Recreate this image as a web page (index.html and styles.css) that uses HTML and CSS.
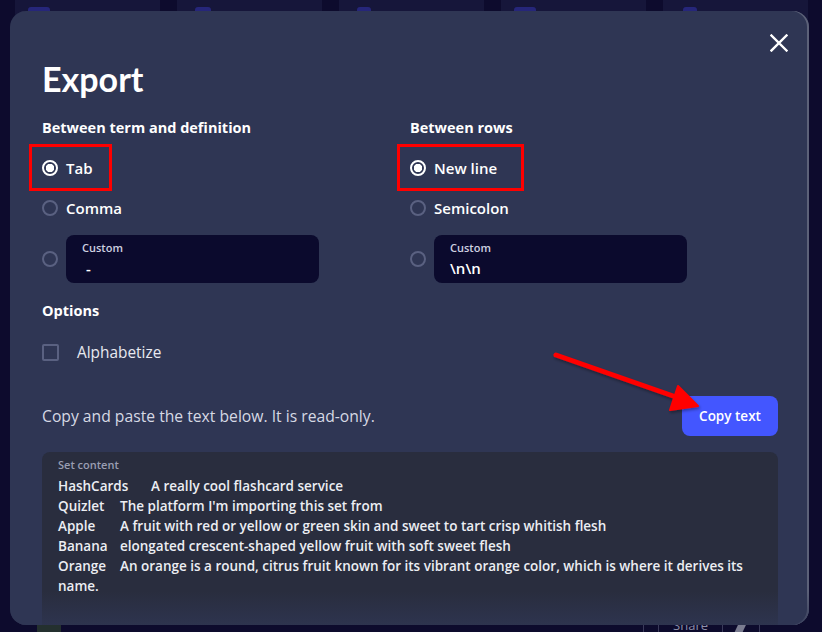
FILE: index.html
```html
<!DOCTYPE html>
<html>
<head>
<meta charset="utf-8">
<title>Export</title>
<link rel="stylesheet" href="styles.css">
</head>
<body>
<div class="page">
  <div class="cards">
    <div class="card"><span class="card-icon"></span></div>
    <div class="card"><span class="card-icon ci2"></span></div>
    <div class="card"><span class="card-icon ci3"></span></div>
    <div class="card"><span class="card-icon"></span></div>
    <div class="card"><span class="card-icon ci5"></span></div>
  </div>
  <div class="bottombar">
    <div class="green"></div>
    <div class="actions">
      <span class="sep"></span><span class="sep"></span>
      <span class="share">Share</span>
      <span class="sep"></span><span class="pen"></span><span class="sep"></span>
    </div>
  </div>
</div>

<div class="modal">
  <button class="close" aria-label="Close">
    <svg width="18" height="18" viewBox="0 0 18 18"><path d="M1.5 1.5 L16.5 16.5 M16.5 1.5 L1.5 16.5" stroke="#fff" stroke-width="2.4" stroke-linecap="square"/></svg>
  </button>
  <h1 class="title">Export</h1>

  <div class="columns">
    <div class="col">
      <h2 class="heading">Between term and definition</h2>
      <label class="radio-row first marked mark-left"><span class="radio checked"></span><span class="rlabel">Tab</span></label>
      <label class="radio-row"><span class="radio"></span><span class="rlabel">Comma</span></label>
      <div class="radio-row custom-row"><span class="radio"></span>
        <div class="custom"><span class="custom-label">Custom</span><span class="custom-value">&nbsp;-</span></div>
      </div>
    </div>
    <div class="col">
      <h2 class="heading">Between rows</h2>
      <label class="radio-row first marked mark-right"><span class="radio checked"></span><span class="rlabel">New line</span></label>
      <label class="radio-row"><span class="radio"></span><span class="rlabel">Semicolon</span></label>
      <div class="radio-row custom-row"><span class="radio"></span>
        <div class="custom"><span class="custom-label">Custom</span><span class="custom-value">\n\n</span></div>
      </div>
    </div>
  </div>

  <h2 class="heading options">Options</h2>
  <label class="check-row"><span class="checkbox"></span><span class="clabel">Alphabetize</span></label>

  <div class="copy-row">
    <p class="hint">Copy and paste the text below. It is read-only.</p>
    <button class="copy-btn">Copy text</button>
  </div>

  <div class="content-box">
    <div class="content-label">Set content</div>
<pre class="content-text">HashCards	A really cool flashcard service
Quizlet	The platform I'm importing this set from
Apple	A fruit with red or yellow or green skin and sweet to tart crisp whitish flesh
Banana	elongated crescent-shaped yellow fruit with soft sweet flesh
Orange	An orange is a round, citrus fruit known for its vibrant orange color, which is where it derives its
name.
</pre>
  </div>
  <div class="fade"></div>
</div>

<svg class="arrow" width="822" height="632" viewBox="0 0 822 632">
  <defs>
    <filter id="sh" x="-10%" y="-10%" width="120%" height="140%">
      <feDropShadow dx="1" dy="2" stdDeviation="1.5" flood-color="#000" flood-opacity="0.35"/>
    </filter>
  </defs>
  <g filter="url(#sh)" fill="#ff0000" stroke="#ff0000">
    <line x1="556" y1="355" x2="676" y2="397" stroke-width="5" stroke-linecap="round"/>
    <polygon points="698,406 670,410 678,386" stroke-width="2" stroke-linejoin="round"/>
  </g>
</svg>
</body>
</html>
```

FILE: styles.css
```css
* { box-sizing: border-box; }
html, body { margin: 0; padding: 0; }
body {
  width: 822px;
  height: 632px;
  overflow: hidden;
  background: #0d0b2d;
  font-family: "Open Sans", Lato, sans-serif;
  position: relative;
}

/* background page */
.page {
  height: 632px;
  display: flex;
  flex-direction: column;
  justify-content: space-between;
}
.cards {
  display: flex;
  gap: 17px;
  padding-left: 15px;
}
.card {
  width: 145px;
  height: 60px;
  background: #16163a;
  position: relative;
}
.card-icon {
  display: block;
  margin: 7px 0 0 13px;
  width: 22px;
  height: 10px;
  background: #26267a;
  border-radius: 3px 3px 0 0;
}
.ci2 { margin-left: 18px; width: 16px; }
.ci3 { margin-left: 18px; width: 14px; }
.ci5 { margin-left: 20px; width: 14px; }

.bottombar {
  height: 40px;
  display: flex;
  justify-content: space-between;
  align-items: flex-end;
  padding: 0 62px 0 37px;
}
.green {
  width: 24px;
  height: 40px;
  background: #24302f;
}
.actions {
  display: flex;
  align-items: flex-end;
  gap: 14px;
  height: 40px;
}
.sep { width: 1px; height: 30px; background: #3a3a5a; }
.share { color: #8d8fa8; font-size: 13px; line-height: 14px; margin-bottom: 0; }
.pen { width: 8px; height: 10px; background: #7a7c90; transform: skewX(-25deg); }

/* modal */
.modal {
  position: absolute;
  left: 10px;
  top: 11px;
  width: 799px;
  height: 614px;
  background: #2f3654;
  border-radius: 16px;
  overflow: hidden;
  padding: 48px 31px 0 32px;
  color: #fff;
  box-shadow: inset -2px 0 0 #5c6178;
}
.close {
  position: absolute;
  top: 23px;
  right: 21px;
  width: 18px;
  height: 18px;
  padding: 0;
  border: 0;
  background: none;
  display: flex;
}
.title {
  margin: 0;
  font-family: Lato, sans-serif;
  font-size: 34px;
  line-height: 40px;
  font-weight: 700;
}
.columns {
  display: grid;
  grid-template-columns: 368px 368px;
  margin-top: 19px;
}
.heading {
  margin: 0;
  font-size: 14.5px;
  line-height: 20px;
  font-weight: 700;
}
.radio-row {
  display: flex;
  align-items: center;
  height: 40px;
  gap: 8px;
  position: relative;
  width: max-content;
}
.radio-row.first { margin-top: 10px; }
.marked::after {
  content: "";
  position: absolute;
  top: -4px;
  bottom: -3px;
  left: -13px;
  right: -19px;
  border: 3px solid #ff0000;
}
.mark-left::after { right: -19px; }
.mark-right::after { right: -27px; }
.rlabel {
  font-size: 15px;
  font-weight: 600;
}
.radio {
  width: 16px;
  height: 16px;
  border-radius: 50%;
  border: 2px solid #5a6181;
  flex: none;
}
.radio.checked {
  border-color: #fff;
  background: radial-gradient(circle, #fff 0 4px, transparent 4.5px);
}
.custom-row {
  height: 48px;
  margin-top: 7px;
  width: auto;
}
.custom {
  width: 253px;
  height: 48px;
  background: #0b0a2d;
  border-radius: 8px;
  padding: 5px 16px 0;
  display: flex;
  flex-direction: column;
}
.custom-label {
  font-size: 11px;
  line-height: 15px;
  color: #cfd1e0;
  font-weight: 600;
}
.custom-value {
  font-size: 15px;
  line-height: 20px;
  margin-top: 3px;
  font-weight: 600;
}

.options { margin-top: 18px; }
.check-row {
  display: flex;
  align-items: center;
  height: 24px;
  margin-top: 19px;
  gap: 18px;
}
.checkbox {
  width: 17px;
  height: 17px;
  border: 2px solid #5a6181;
  border-radius: 2px;
}
.clabel {
  font-size: 15.4px;
  color: #e8e9f0;
}

.copy-row {
  display: flex;
  justify-content: space-between;
  align-items: center;
  margin-top: 32px;
}
.hint {
  margin: 0;
  font-size: 15.7px;
  color: #d6d9e4;
}
.copy-btn {
  width: 96px;
  height: 40px;
  border: 0;
  border-radius: 8px;
  background: #4356ff;
  color: #fff;
  font-family: "Open Sans", sans-serif;
  font-size: 13.5px;
  font-weight: 600;
  padding: 0;
}

.content-box {
  margin-top: 16px;
  background: #292d3e;
  border-radius: 8px;
  padding: 5px 16px 20px;
  height: 200px;
}
.content-label {
  font-size: 11px;
  line-height: 15px;
  color: #9a9eb2;
  font-weight: 600;
}
.content-text {
  margin: 4px 0 0;
  font-family: "Open Sans", sans-serif;
  font-size: 13.5px;
  line-height: 20px;
  font-weight: 600;
  color: #eceef3;
  white-space: pre;
  tab-size: 31px;
  -moz-tab-size: 31px;
}
.fade {
  position: absolute;
  left: 0;
  right: 0;
  bottom: 0;
  height: 34px;
  background: linear-gradient(rgba(47,54,84,0), rgba(47,54,84,0.75));
}

.arrow {
  position: absolute;
  left: 0;
  top: 0;
  pointer-events: none;
}
```
